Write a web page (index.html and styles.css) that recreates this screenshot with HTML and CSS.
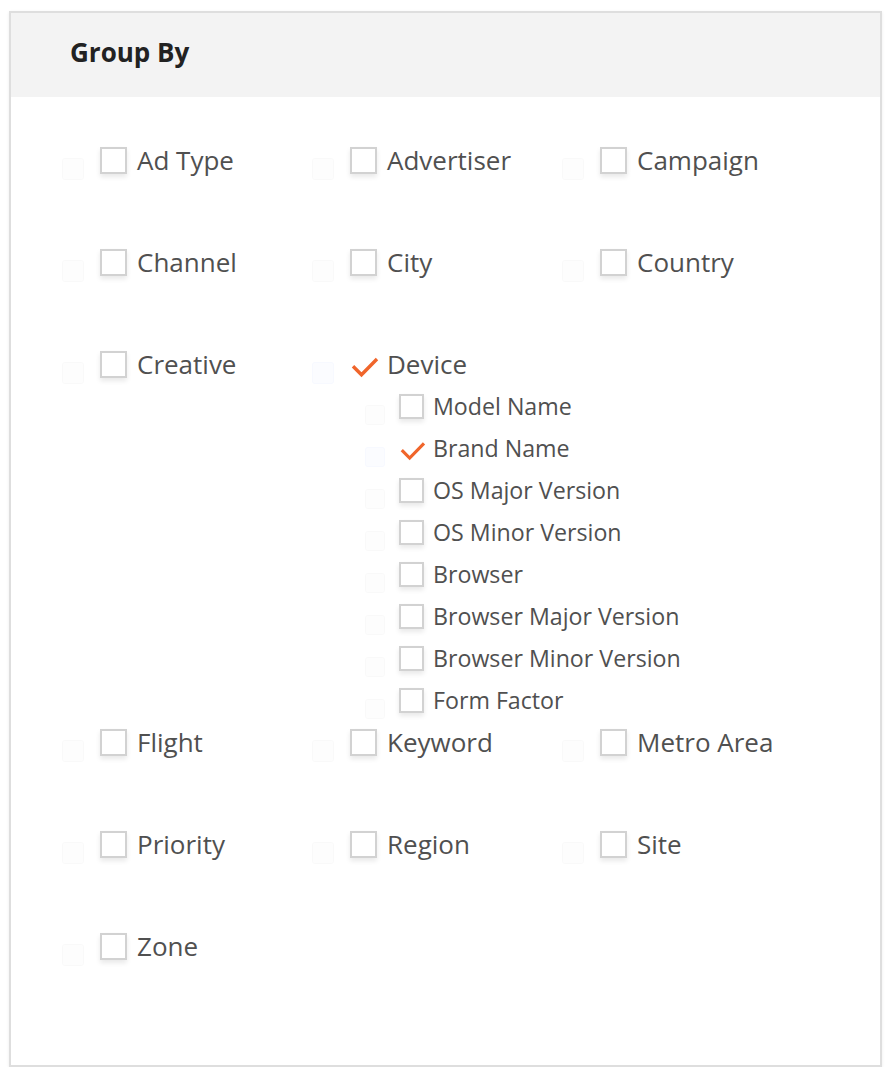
FILE: index.html
```html
<!DOCTYPE html>
<html lang="en">
<head>
<meta charset="utf-8">
<title>Group By</title>
<link rel="stylesheet" href="styles.css">
</head>
<body>
<div class="panel">
  <div class="panel-head"><h2 class="title">Group By</h2></div>
  <div class="options">
    <div class="opt"><div class="opt-row"><span class="ghost"></span><span class="box"></span><span class="label">Ad Type</span></div></div>
    <div class="opt"><div class="opt-row"><span class="ghost"></span><span class="box"></span><span class="label">Advertiser</span></div></div>
    <div class="opt"><div class="opt-row"><span class="ghost"></span><span class="box"></span><span class="label">Campaign</span></div></div>
    <div class="opt"><div class="opt-row"><span class="ghost"></span><span class="box"></span><span class="label">Channel</span></div></div>
    <div class="opt"><div class="opt-row"><span class="ghost"></span><span class="box"></span><span class="label">City</span></div></div>
    <div class="opt"><div class="opt-row"><span class="ghost"></span><span class="box"></span><span class="label">Country</span></div></div>
    <div class="opt"><div class="opt-row"><span class="ghost"></span><span class="box"></span><span class="label">Creative</span></div></div>
    <div class="opt opt--expanded">
      <div class="opt-row"><span class="ghost ghost--checked"></span><svg class="check" viewBox="0 0 27 27"><polyline points="3,15.3 11.5,23.8 27,8"/></svg><span class="label">Device</span></div>
      <ul class="sub">
        <li class="sub-row"><span class="ghost"></span><span class="box"></span><span class="label">Model Name</span></li>
        <li class="sub-row"><span class="ghost ghost--checked"></span><svg class="check" viewBox="0 0 27 27"><polyline points="3,15.3 11.5,23.8 27,8"/></svg><span class="label">Brand Name</span></li>
        <li class="sub-row"><span class="ghost"></span><span class="box"></span><span class="label">OS Major Version</span></li>
        <li class="sub-row"><span class="ghost"></span><span class="box"></span><span class="label">OS Minor Version</span></li>
        <li class="sub-row"><span class="ghost"></span><span class="box"></span><span class="label">Browser</span></li>
        <li class="sub-row"><span class="ghost"></span><span class="box"></span><span class="label">Browser Major Version</span></li>
        <li class="sub-row"><span class="ghost"></span><span class="box"></span><span class="label">Browser Minor Version</span></li>
        <li class="sub-row"><span class="ghost"></span><span class="box"></span><span class="label">Form Factor</span></li>
      </ul>
    </div>
    <div class="opt opt--newrow"><div class="opt-row"><span class="ghost"></span><span class="box"></span><span class="label">Flight</span></div></div>
    <div class="opt"><div class="opt-row"><span class="ghost"></span><span class="box"></span><span class="label">Keyword</span></div></div>
    <div class="opt"><div class="opt-row"><span class="ghost"></span><span class="box"></span><span class="label">Metro Area</span></div></div>
    <div class="opt"><div class="opt-row"><span class="ghost"></span><span class="box"></span><span class="label">Priority</span></div></div>
    <div class="opt"><div class="opt-row"><span class="ghost"></span><span class="box"></span><span class="label">Region</span></div></div>
    <div class="opt"><div class="opt-row"><span class="ghost"></span><span class="box"></span><span class="label">Site</span></div></div>
    <div class="opt"><div class="opt-row"><span class="ghost"></span><span class="box"></span><span class="label">Zone</span></div></div>
  </div>
</div>
</body>
</html>
```

FILE: styles.css
```css
html, body {
  margin: 0;
  padding: 0;
  background: #fff;
}

body {
  font-family: "Open Sans", "Noto Sans", sans-serif;
  color: #505050;
}

.panel {
  box-sizing: border-box;
  width: 873px;
  margin: 11px 0 0 9px;
  border: 2px solid #dedede;
  background: #fff;
  box-shadow: 0 1px 3px rgba(0, 0, 0, 0.08);
}

.panel-head {
  height: 84px;
  background: #f3f3f3;
  display: flex;
  align-items: center;
  padding-left: 59px;
}

.title {
  margin: 0;
  font-size: 26px;
  font-weight: 700;
  color: #222;
  line-height: 1;
  padding-bottom: 7px;
}

.options {
  display: grid;
  grid-template-columns: repeat(3, 250px);
  align-items: start;
  padding: 42px 0 38px 51px;
}

.opt {
  padding-bottom: 60px;
}

.opt--expanded {
  padding-bottom: 0;
}

.opt--newrow {
  grid-column: 1;
}

.opt-row {
  display: flex;
  align-items: center;
  height: 42px;
}

.ghost {
  flex: none;
  box-sizing: border-box;
  width: 22px;
  height: 22px;
  margin-top: 17px;
  margin-right: 16px;
  border: 1px solid rgba(0, 0, 0, 0.018);
  border-radius: 3px;
  background: rgba(0, 0, 0, 0.006);
}

.ghost--checked {
  background: rgba(40, 110, 230, 0.018);
  border-color: rgba(40, 110, 230, 0.02);
}

.box {
  flex: none;
  box-sizing: border-box;
  width: 27px;
  height: 27px;
  margin-right: 10px;
  border: 2px solid #d2d2d2;
  background: #fff;
  box-shadow: 0 3px 5px rgba(0, 0, 0, 0.09);
}

.check {
  flex: none;
  width: 27px;
  height: 27px;
  margin-right: 10px;
  overflow: visible;
}

.check polyline {
  fill: none;
  stroke: #f0652b;
  stroke-width: 3.4;
  stroke-linecap: butt;
  stroke-linejoin: miter;
}

.label {
  font-size: 26px;
  line-height: 42px;
  color: #505050;
  white-space: nowrap;
}

.sub {
  list-style: none;
  margin: 0 0 0 53px;
  padding: 0;
}

.sub-row {
  display: flex;
  align-items: center;
  height: 42px;
}

.sub .ghost {
  width: 20px;
  height: 20px;
  margin-right: 14px;
}

.sub .box {
  width: 25px;
  height: 25px;
  margin-right: 9px;
}

.sub .check {
  width: 25px;
  height: 25px;
  margin-right: 9px;
}

.sub .label {
  font-size: 23.2px;
}
```
